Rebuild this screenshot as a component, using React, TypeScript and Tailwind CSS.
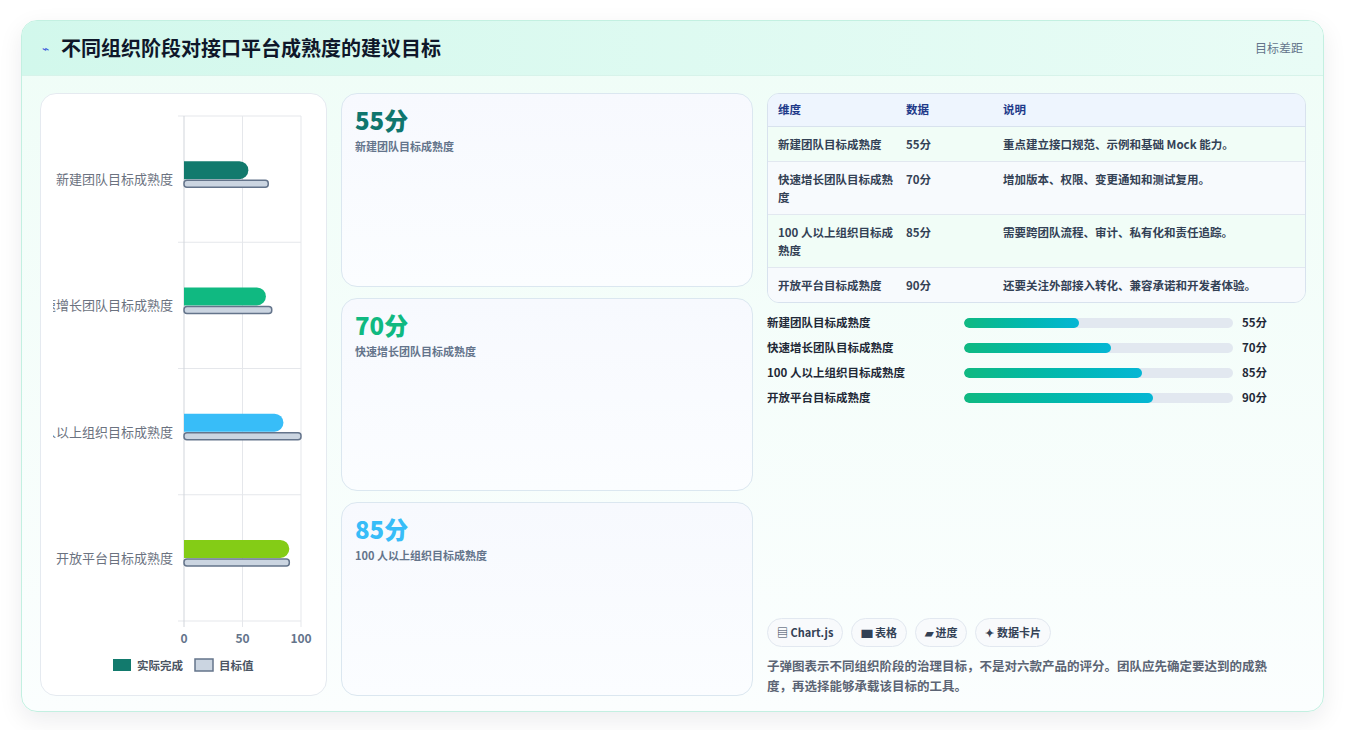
const rows = [
  { name: '新建团队目标成熟度', score: 55, target: 72, color: '#127a6d', desc: '重点建立接口规范、示例和基础 Mock 能力。', scoreColor: 'text-[#0f766e]' },
  { name: '快速增长团队目标成熟度', score: 70, target: 75, color: '#10b981', desc: '增加版本、权限、变更通知和测试复用。', scoreColor: 'text-[#10b981]' },
  { name: '100 人以上组织目标成熟度', score: 85, target: 100, color: '#38bdf8', desc: '需要跨团队流程、审计、私有化和责任追踪。', scoreColor: 'text-[#38bdf8]' },
  { name: '开放平台目标成熟度', score: 90, target: 90, color: '#84cc16', desc: '还要关注外部接入转化、兼容承诺和开发者体验。', scoreColor: 'text-[#84cc16]' },
]

const font = { fontFamily: '"Noto Sans CJK SC", "Noto Sans", sans-serif' }

function BulletChart() {
  const x0 = 143
  const w = 117
  const top = 22
  const band = 126.25
  return (
    <svg width="286" height="601" className="block">
      <defs>
        <clipPath id="lbl">
          <rect x="12" y="0" width="274" height="601" />
        </clipPath>
      </defs>
      {[0, 1, 2, 3, 4].map((i) => (
        <line key={i} x1={x0 - 6} x2={x0 + w} y1={top + i * band} y2={top + i * band} stroke="#e5e7eb" />
      ))}
      {[0, 50, 100].map((v) => (
        <line key={v} x1={x0 + (w * v) / 100} x2={x0 + (w * v) / 100} y1={top} y2={top + 4 * band + 6} stroke={v === 0 ? '#d1d5db' : '#e5e7eb'} />
      ))}
      {rows.map((r, i) => {
        const cy = top + band * i + band / 2
        const aw = (w * r.score) / 100
        const tw = (w * r.target) / 100
        return (
          <g key={r.name}>
            <text x={132} y={cy + 5} textAnchor="end" fontSize="13" fill="#6b7280" clipPath="url(#lbl)">{r.name}</text>
            <path d={`M${x0} ${cy - 18} h${aw - 9} a9 9 0 0 1 9 9 a9 9 0 0 1 -9 9 h${-(aw - 9)} z`} fill={r.color} />
            <rect x={x0} y={cy + 1} width={tw} height={7} rx={3} fill="#cbd5e1" stroke="#64748b" strokeWidth="1.5" />
          </g>
        )
      })}
      {[0, 50, 100].map((v) => (
        <text key={v} x={x0 + (w * v) / 100} y={549} textAnchor="middle" fontSize="12" fontWeight="700" fill="#64748b">{v}</text>
      ))}
      <rect x={72} y={565} width={18} height={12} fill="#127a6d" />
      <text x={96} y={576} fontSize="11.5" fontWeight="600" fill="#4b5563">实际完成</text>
      <rect x={154} y={565} width={18} height={12} fill="#cbd5e1" stroke="#64748b" strokeWidth="1.5" />
      <text x={178} y={576} fontSize="11.5" fontWeight="600" fill="#4b5563">目标值</text>
    </svg>
  )
}

export default function App() {
  return (
    <div className="min-h-[730px] bg-white px-[21px] pt-[20px]" style={font}>
      <div className="w-[1303px] h-[692px] rounded-2xl border border-[#c3f0e1] overflow-hidden shadow-[0_8px_24px_rgba(15,23,42,0.08)] bg-gradient-to-b from-[#effdf7] to-[#fbfefe] flex flex-col">
        <div className="h-[55px] shrink-0 flex items-center justify-between px-5 bg-gradient-to-r from-[#d2f8ec] to-[#e9fcf6] border-b border-[#d7f3ea]">
          <div className="flex items-center gap-3">
            <span className="text-[#3b5bdb] text-xs">⌁</span>
            <h1 className="text-[20px] font-bold text-[#0f172a]">不同组织阶段对接口平台成熟度的建议目标</h1>
          </div>
          <span className="text-[12px] text-[#64748b]">目标差距</span>
        </div>
        <div className="flex-1 flex gap-[14px] pl-[18px] pr-[17px] pt-[17px] pb-[17px]">
          <div className="w-[287px] shrink-0 rounded-2xl border border-[#e5eaf0] bg-white overflow-hidden">
            <BulletChart />
          </div>
          <div className="w-[412px] shrink-0 flex flex-col gap-[11px]">
            {rows.slice(0, 3).map((r) => (
              <div key={r.name} className="flex-1 rounded-2xl border border-[#dbe7f0] bg-gradient-to-b from-[#f7f9fe] to-[#fbfdff] px-[13px] pt-[10px]">
                <div className={`text-[24px] font-extrabold leading-[32px] ${r.scoreColor}`}>{r.score}分</div>
                <div className="text-[11px] font-semibold text-[#64748b] mt-[2px]">{r.name}</div>
              </div>
            ))}
          </div>
          <div className="flex-1 flex flex-col">
            <div className="rounded-xl border border-[#d8e2ee] overflow-hidden text-[11.5px]">
              <div className="grid grid-cols-[128px_97px_1fr] h-[33px] items-center px-[10px] bg-[#eef5fe] border-b border-[#d8e2ee] font-semibold text-[#1e3a8a]">
                <span>维度</span><span>数据</span><span>说明</span>
              </div>
              {rows.map((r, i) => (
                <div key={r.name} className={`grid grid-cols-[128px_97px_1fr] px-[10px] py-[8px] leading-[18px] font-semibold text-[#334155] ${i < 3 ? 'border-b border-[#e2e8f0]' : ''} ${i % 2 === 0 ? 'bg-[#f1fdf7]' : 'bg-[#f7fafd]'}`}>
                  <span className="pr-2">{r.name}</span>
                  <span>{r.score}分</span>
                  <span>{r.desc}</span>
                </div>
              ))}
            </div>
            <div className="flex flex-col gap-[6px] mt-[10px]">
              {rows.map((r) => (
                <div key={r.name} className="flex items-center h-[19px] text-[11.5px] font-semibold text-[#1f2937]">
                  <span className="w-[197px]">{r.name}</span>
                  <div className="w-[269px] h-[10px] rounded-full bg-[#e2e8f0] overflow-hidden">
                    <div className="h-full rounded-full bg-gradient-to-r from-[#10b981] to-[#06b6d4]" style={{ width: `${(r.score * 269) / 100 * 0.78}px` }} />
                  </div>
                  <span className="ml-[9px]">{r.score}分</span>
                </div>
              ))}
            </div>
            <div className="mt-auto flex gap-2 text-[11px] font-semibold text-[#334155]">
              {['▤ Chart.js', '▆ 表格', '▰ 进度', '✦ 数据卡片'].map((t) => (
                <span key={t} className="h-[29px] px-[9px] flex items-center rounded-full border border-[#e2e8f0] bg-[#f8fafc]">{t}</span>
              ))}
            </div>
            <p className="mt-[9px] pr-[20px] text-[12.5px] leading-[20px] font-semibold text-[#5b6474]">
              子弹图表示不同组织阶段的治理目标，不是对六款产品的评分。团队应先确定要达到的成熟度，再选择能够承载该目标的工具。
            </p>
          </div>
        </div>
      </div>
    </div>
  )
}
